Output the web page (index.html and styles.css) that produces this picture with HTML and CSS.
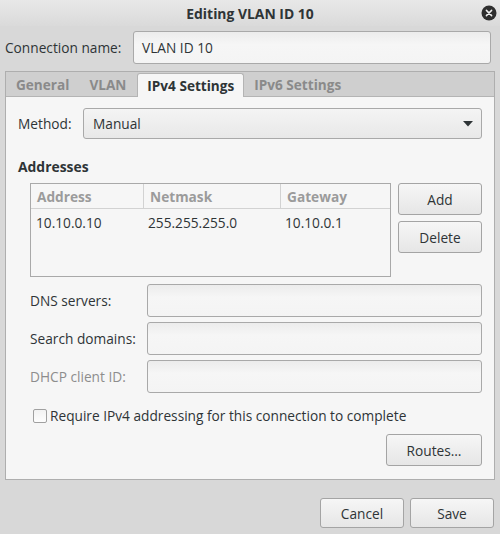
FILE: index.html
```html
<!DOCTYPE html>
<html>
<head>
<meta charset="utf-8">
<link rel="stylesheet" href="styles.css">
</head>
<body>
<div class="window">
  <div class="titlebar">
    <span class="spacer"></span>
    <span class="title">Editing VLAN ID 10</span>
    <span class="close-wrap">
      <svg class="close" width="16" height="16" viewBox="0 0 16 16"><circle cx="8" cy="8" r="7.5" fill="#2e2e2e"/><path d="M5.4 5.4 L10.6 10.6 M10.6 5.4 L5.4 10.6" stroke="#f0f0f0" stroke-width="1.5" stroke-linecap="round"/></svg>
    </span>
  </div>
  <div class="content">
    <div class="name-row">
      <label class="name-label">Connection name:</label>
      <div class="entry name-entry">VLAN ID 10</div>
    </div>
    <div class="notebook">
      <div class="tabs">
        <div class="tab">General</div>
        <div class="tab">VLAN</div>
        <div class="tab active">IPv4 Settings</div>
        <div class="tab">IPv6 Settings</div>
      </div>
      <div class="page">
        <div class="method-row">
          <span class="method-label">Method:</span>
          <div class="combo"><span>Manual</span>
            <svg width="10" height="6" viewBox="0 0 10 6"><path d="M0 0 L10 0 L5 5.5 Z" fill="#2e3436"/></svg>
          </div>
        </div>
        <div class="section-title">Addresses</div>
        <div class="addr-row">
          <div class="table">
            <div class="thead">
              <div class="th c1">Address</div>
              <div class="th c2">Netmask</div>
              <div class="th c3">Gateway</div>
            </div>
            <div class="tr">
              <div class="td c1">10.10.0.10</div>
              <div class="td c2">255.255.255.0</div>
              <div class="td c3">10.10.0.1</div>
            </div>
          </div>
          <div class="addr-buttons">
            <div class="button">Add</div>
            <div class="button">Delete</div>
          </div>
        </div>
        <div class="form">
          <span class="flabel">DNS servers:</span>
          <div class="entry"></div>
          <span class="flabel">Search domains:</span>
          <div class="entry"></div>
          <span class="flabel dim">DHCP client ID:</span>
          <div class="entry"></div>
        </div>
        <div class="check-row">
          <span class="checkbox"></span>
          <span>Require IPv4 addressing for this connection to complete</span>
        </div>
        <div class="routes-row">
          <div class="button routes">Routes…</div>
        </div>
      </div>
    </div>
    <div class="actions">
      <div class="button action">Cancel</div>
      <div class="button action">Save</div>
    </div>
  </div>
</div>
</body>
</html>
```
FILE: styles.css
```css
html, body {
  margin: 0;
  padding: 0;
}
body {
  width: 500px;
  height: 534px;
  background: #d8d8d8;
  font-family: "Open Sans", "DejaVu Sans", sans-serif;
  font-size: 13.7px;
  color: #2e3436;
  overflow: hidden;
}
.window {
  display: flex;
  flex-direction: column;
  height: 534px;
}
.titlebar {
  height: 26px;
  display: grid;
  grid-template-columns: 1fr auto 1fr;
  align-items: center;
  background: linear-gradient(#e8e8e8, #dadada);
}
.title {
  font-weight: bold;
  font-size: 13.9px;
  color: #2e3436;
}
.close-wrap {
  display: flex;
  justify-content: flex-end;
  padding-right: 3px;
}
.close { display: block; }
.content {
  padding: 5px 5px 0 5px;
  display: flex;
  flex-direction: column;
}
.name-row {
  display: flex;
  align-items: center;
}
.name-label {
  width: 128px;
}
.entry {
  height: 31px;
  border: 1px solid #a9a9a9;
  border-radius: 3px;
  background: linear-gradient(#ececec, #f6f6f6 40%, #f4f4f4);
  box-sizing: content-box;
  display: flex;
  align-items: center;
  padding: 0 8px;
}
.name-entry {
  flex: 1;
  margin-right: 4px;
}
.notebook {
  margin-top: 7px;
  border: 1px solid #aeaeae;
  display: flex;
  flex-direction: column;
}
.tabs {
  height: 24px;
  display: flex;
  background: #cfcfcf;
  border-bottom: 1px solid #b4b4b4;
}
.tab {
  padding: 0 10px;
  display: flex;
  align-items: center;
  font-weight: bold;
  font-size: 13.6px;
  color: #8a8a8a;
}
.tab.active {
  background: #f6f6f6;
  color: #2e3436;
  border: 1px solid #b4b4b4;
  border-bottom: none;
  border-radius: 3px 3px 0 0;
  margin-top: 1px;
  margin-bottom: -1px;
  padding: 0 9px;
  margin-left: 1px;
}
.page {
  background: #f6f6f6;
  height: 382px;
  padding: 11px 12px 0 12px;
  box-sizing: border-box;
}
.method-row {
  display: flex;
  align-items: center;
}
.method-label {
  width: 65px;
}
.combo {
  flex: 1;
  height: 29px;
  border: 1px solid #a9a9a9;
  border-radius: 3px;
  background: linear-gradient(#f4f4f4, #e8e8e8);
  display: flex;
  align-items: center;
  justify-content: space-between;
  padding: 0 8px 0 9px;
}
.section-title {
  font-weight: bold;
  font-size: 13.9px;
  margin-top: 19px;
  height: 18px;
  line-height: 18px;
}
.addr-row {
  margin-top: 7px;
  padding-left: 12px;
  display: flex;
  gap: 7px;
}
.table {
  width: 359px;
  height: 92px;
  border: 1px solid #a9a9a9;
  background: #f6f6f6;
}
.thead, .tr {
  display: grid;
  grid-template-columns: 112px 137px 1fr;
}
.thead {
  height: 24px;
  border-bottom: 1px solid #d2d2d2;
}
.th {
  color: #9b9b9b;
  font-weight: bold;
  display: flex;
  align-items: center;
  padding-left: 6px;
  border-left: 1px solid #d2d2d2;
}
.th.c1 { border-left: none; }
.tr { height: 26px; }
.td {
  display: flex;
  align-items: center;
  padding-left: 5px;
}
.addr-buttons {
  flex: 1;
  display: flex;
  flex-direction: column;
  gap: 6px;
}
.button {
  height: 30px;
  border: 1px solid #a4a4a4;
  border-radius: 3px;
  background: linear-gradient(#f6f6f6, #e6e6e6);
  display: flex;
  align-items: center;
  justify-content: center;
  box-sizing: content-box;
}
.form {
  margin-top: 7px;
  padding-left: 12px;
  display: grid;
  grid-template-columns: 117px 1fr;
  row-gap: 5px;
  align-items: center;
}
.form .entry {
  padding: 0;
  height: 31px;
}
.flabel.dim { color: #8d8d8d; }
.check-row {
  margin-top: 13px;
  padding-left: 15px;
  display: flex;
  align-items: center;
  gap: 3px;
}
.checkbox {
  width: 12px;
  height: 12px;
  border: 1px solid #a0a0a0;
  border-radius: 2px;
  background: linear-gradient(#f2f2f2, #fdfdfd);
}
.routes-row {
  margin-top: 9px;
  display: flex;
  justify-content: flex-end;
}
.routes {
  width: 94px;
}
.actions {
  margin-top: 18px;
  display: flex;
  justify-content: flex-end;
  gap: 6px;
  padding-right: 1px;
}
.action {
  width: 82px;
  height: 28px;
}
```
